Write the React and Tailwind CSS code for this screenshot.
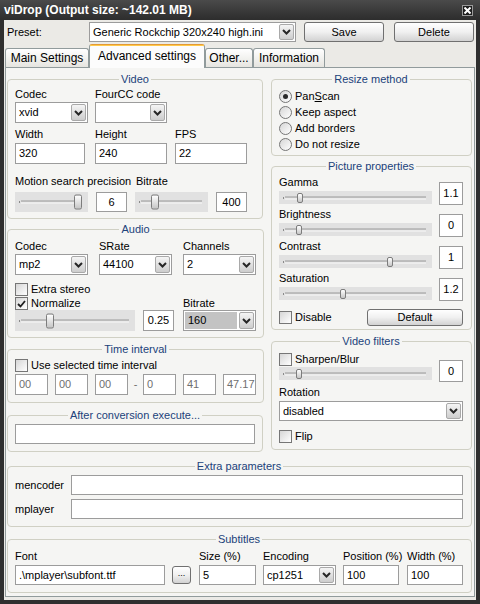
import React from "react";

// Small building blocks of the classic dialog look

function Lbl({ children, className = "" }) {
  return <div className={`h-[13px] whitespace-nowrap leading-[13px] ${className}`}>{children}</div>;
}

function Group({ title, className = "", children }) {
  return (
    <fieldset className={`rounded-[4px] border border-[#d0d0c4] ${className}`}>
      <legend className="mx-auto h-[13px] px-[2px] leading-[13px] text-[#21427a]">{title}</legend>
      {children}
    </fieldset>
  );
}

function Edit({ value = "", className = "", center = false, dim = false }) {
  return (
    <div
      className={`flex items-center overflow-hidden whitespace-nowrap border border-[#9c9c9c] bg-white leading-[13px] ${
        center ? "justify-center" : "pl-[3px]"
      } ${dim ? "text-[#6f6f6f]" : ""} ${className}`}
    >
      {value}
    </div>
  );
}

function Chevron() {
  return (
    <svg width="9" height="6" viewBox="0 0 9 6">
      <polyline points="1,1 4.5,4.5 8,1" fill="none" stroke="#262626" strokeWidth="2" />
    </svg>
  );
}

function Combo({ value = "", className = "", gray = false }) {
  return (
    <div className={`flex border border-[#9c9c9c] bg-white ${className}`}>
      <div
        className={`flex flex-1 items-center overflow-hidden whitespace-nowrap pl-[3px] leading-[13px] ${
          gray ? "m-[1px] bg-[#c3c3c3]" : ""
        }`}
      >
        {value}
      </div>
      <div className="m-[1px] flex w-[15px] items-center justify-center rounded-[2px] border border-[#a9a9a9] bg-linear-to-b from-[#f5f5f5] to-[#cdcdcd]">
        <Chevron />
      </div>
    </div>
  );
}

function Slider({ width, frac, small = false, className = "" }) {
  const thumb = small ? 6 : 8;
  const left = 6 + Math.round(frac * (width - 12 - thumb));
  return (
    <div className={`relative bg-[#e1e1e1] ${className}`}>
      <div className="absolute left-[6px] right-[6px] top-1/2 h-[3px] -translate-y-1/2 border-y border-t-[#a0a0a0] border-b-white bg-[#d6d6d6]" />
      <div className="absolute left-[4px] top-1/2 h-[2px] w-[1px] -translate-y-1/2 bg-[#8a8a8a]" />
      <div
        className={`absolute top-1/2 -translate-y-1/2 rounded-[2px] border border-[#7c7c7c] bg-linear-to-b from-white to-[#c6c6c6] ${
          small ? "h-[10px] w-[6px]" : "h-[15px] w-[8px]"
        }`}
        style={{ left }}
      />
    </div>
  );
}

function Check({ label, checked = false, className = "" }) {
  return (
    <div className={`flex h-[13px] items-center gap-[3px] ${className}`}>
      <div className="flex h-[13px] w-[13px] shrink-0 items-center justify-center border border-[#767676] bg-linear-to-br from-[#d6d6d6] to-white">
        {checked && (
          <svg width="9" height="8" viewBox="0 0 9 8">
            <polyline points="1,4 3.5,6.5 8,1" fill="none" stroke="#1e1e1e" strokeWidth="1.8" />
          </svg>
        )}
      </div>
      <span className="whitespace-nowrap leading-[13px]">{label}</span>
    </div>
  );
}

function Radio({ children, checked = false }) {
  return (
    <div className="flex h-[13px] items-center gap-[3px]">
      <div className="flex h-[13px] w-[13px] items-center justify-center rounded-full border border-[#767676] bg-linear-to-br from-[#d6d6d6] to-white">
        {checked && <div className="h-[5px] w-[5px] rounded-full bg-[#2a2a2a]" />}
      </div>
      <span className="whitespace-nowrap leading-[13px]">{children}</span>
    </div>
  );
}

function Btn({ children, className = "" }) {
  return (
    <button
      type="button"
      className={`flex items-center justify-center rounded-[3px] border border-[#707070] bg-linear-to-b from-white via-[#f0f0f0] to-[#d2d2d2] leading-[13px] ${className}`}
    >
      {children}
    </button>
  );
}

function Tab({ children, active = false, className = "" }) {
  if (active) {
    return (
      <div
        className={`-mb-[1px] flex h-[24px] flex-col rounded-t-[3px] border border-b-0 border-[#919b9c] border-t-[#e39a36] bg-[#fcfcfc] ${className}`}
      >
        <div className="h-[1px] bg-[#ffc94a]" />
        <div className="flex flex-1 items-center justify-center pb-[2px] text-[12px] leading-[14px]">{children}</div>
      </div>
    );
  }
  return (
    <div
      className={`flex h-[19px] items-center justify-center rounded-t-[3px] border border-b-0 border-[#919b9c] bg-linear-to-b from-white to-[#e6e5e0] text-[12px] leading-[14px] ${className}`}
    >
      {children}
    </div>
  );
}

function PropRow({ label, value, frac, className = "" }) {
  return (
    <div className={`flex items-start ${className}`}>
      <div className="flex w-[153px] flex-col">
        <Lbl>{label}</Lbl>
        <Slider width={153} frac={frac} small className="mt-[2px] h-[13px]" />
      </div>
      <Edit value={value} center className="ml-[7px] mt-[6px] h-[23px] w-[24px]" />
    </div>
  );
}

export default function App() {
  return (
    <div className="flex h-[604px] w-[480px] flex-col overflow-hidden bg-[#2f2f2f] font-['Liberation_Sans',Arial,sans-serif] text-[11px] text-black">
      {/* title bar */}
      <div className="flex h-[20px] shrink-0 items-center justify-between bg-linear-to-b from-[#4a4a4a] to-[#2d2d2d] pl-[4px] pr-[7px]">
        <span className="text-[12px] font-bold leading-[14px] text-white">viDrop (Output size: ~142.01 MB)</span>
        <div className="flex h-[11px] w-[11px] items-center justify-center border border-[#9a9a9a] bg-[#1e1e1e]">
          <svg width="7" height="7" viewBox="0 0 7 7">
            <path d="M0.5 0.5 L6.5 6.5 M6.5 0.5 L0.5 6.5" stroke="#fff" strokeWidth="2" />
          </svg>
        </div>
      </div>

      <div className="mx-[4px] mb-[4px] flex flex-1 flex-col bg-[#ebeae6]">
        {/* preset row */}
        <div className="flex h-[24px] shrink-0 items-start pl-[3px] pt-[2px]">
          <span className="w-[82px] leading-[20px]">Preset:</span>
          <Combo value="Generic Rockchip 320x240 high.ini" className="h-[20px] w-[207px]" />
          <Btn className="ml-[8px] h-[20px] w-[80px]">Save</Btn>
          <Btn className="ml-[10px] h-[20px] w-[80px]">Delete</Btn>
        </div>

        {/* tabs */}
        <div className="relative z-10 flex h-[23px] shrink-0 items-end pl-[1px]">
          <Tab className="w-[84px]">Main Settings</Tab>
          <Tab active className="w-[116px]">
            Advanced settings
          </Tab>
          <Tab className="w-[48px]">Other...</Tab>
          <Tab className="w-[72px]">Information</Tab>
        </div>

        {/* tab page */}
        <div className="mx-[1px] mb-[3px] flex-1 border border-[#919b9c] bg-[#f5f5f3] pl-[1px] pt-[5px]">
          <div className="flex items-start">
            {/* left column */}
            <div className="flex w-[256px] flex-col">
              <Group title="Video" className="pb-[6px] pl-[7px] pr-[7px]">
                <div className="mt-[2px] flex">
                  <div className="flex w-[73px] flex-col">
                    <Lbl>Codec</Lbl>
                    <Combo value="xvid" className="mt-[1px] h-[21px]" />
                  </div>
                  <div className="ml-[7px] flex w-[72px] flex-col">
                    <Lbl>FourCC code</Lbl>
                    <Combo className="mt-[1px] h-[21px]" />
                  </div>
                </div>
                <div className="mt-[5px] flex">
                  <div className="flex w-[70px] flex-col">
                    <Lbl>Width</Lbl>
                    <Edit value="320" className="mt-[2px] h-[21px]" />
                  </div>
                  <div className="ml-[10px] flex w-[72px] flex-col">
                    <Lbl>Height</Lbl>
                    <Edit value="240" className="mt-[2px] h-[21px]" />
                  </div>
                  <div className="ml-[8px] flex w-[72px] flex-col">
                    <Lbl>FPS</Lbl>
                    <Edit value="22" className="mt-[2px] h-[21px]" />
                  </div>
                </div>
                <div className="mt-[11px] flex">
                  <Lbl className="w-[121px]">Motion search precision</Lbl>
                  <Lbl>Bitrate</Lbl>
                </div>
                <div className="mt-[4px] flex">
                  <Slider width={73} frac={1} className="h-[20px] w-[73px]" />
                  <Edit value="6" center className="ml-[8px] h-[20px] w-[31px]" />
                  <Slider width={73} frac={0.19} className="ml-[8px] h-[20px] w-[73px]" />
                  <Edit value="400" center className="ml-[8px] h-[20px] w-[31px]" />
                </div>
              </Group>

              <Group title="Audio" className="mt-[4px] pb-[6px] pl-[7px] pr-[7px]">
                <div className="mt-[4px] flex">
                  <div className="flex w-[73px] flex-col">
                    <Lbl>Codec</Lbl>
                    <Combo value="mp2" className="mt-[1px] h-[21px]" />
                  </div>
                  <div className="ml-[11px] flex w-[73px] flex-col">
                    <Lbl>SRate</Lbl>
                    <Combo value="44100" className="mt-[1px] h-[21px]" />
                  </div>
                  <div className="ml-[11px] flex w-[73px] flex-col">
                    <Lbl>Channels</Lbl>
                    <Combo value="2" className="mt-[1px] h-[21px]" />
                  </div>
                </div>
                <Check label="Extra stereo" className="mt-[8px]" />
                <div className="mt-[1px] flex">
                  <Check label="Normalize" checked className="w-[168px]" />
                  <Lbl>Bitrate</Lbl>
                </div>
                <div className="flex">
                  <Slider width={120} frac={0.25} className="h-[21px] w-[120px]" />
                  <Edit value="0.25" center className="ml-[8px] h-[21px] w-[31px]" />
                  <Combo value="160" gray className="ml-[9px] h-[21px] w-[73px]" />
                </div>
              </Group>

              <Group title="Time interval" className="mt-[5px] pb-[7px] pl-[7px] pr-[7px]">
                <Check label="Use selected time interval" className="mt-[3px]" />
                <div className="mt-[2px] flex items-center">
                  <Edit value="00" dim className="h-[21px] w-[33px]" />
                  <Edit value="00" dim className="ml-[7px] h-[21px] w-[33px]" />
                  <Edit value="00" dim className="ml-[7px] h-[21px] w-[33px]" />
                  <span className="w-[15px] text-center text-[#6f6f6f]">-</span>
                  <Edit value="0" dim className="h-[21px] w-[33px]" />
                  <Edit value="41" dim className="ml-[7px] h-[21px] w-[33px]" />
                  <Edit value="47.17" dim className="ml-[7px] h-[21px] w-[33px]" />
                </div>
              </Group>

              <Group title="After conversion execute..." className="mt-[6px] pb-[7px] pl-[7px] pr-[7px]">
                <Edit className="mt-[2px] h-[20px]" />
              </Group>
            </div>

            {/* right column */}
            <div className="ml-[8px] flex w-[201px] flex-col">
              <Group title="Resize method" className="pb-[4px] pl-[7px] pr-[8px]">
                <div className="mt-[4px] flex flex-col gap-[3px]">
                  <Radio checked>
                    Pan<span className="underline">S</span>can
                  </Radio>
                  <Radio>Keep aspect</Radio>
                  <Radio>Add borders</Radio>
                  <Radio>Do not resize</Radio>
                </div>
              </Group>

              <Group title="Picture properties" className="mt-[4px] pb-[3px] pl-[7px] pr-[8px]">
                <PropRow label="Gamma" value="1.1" frac={0.089} className="mt-[3px]" />
                <PropRow label="Brightness" value="0" frac={0.081} className="mt-[3px]" />
                <PropRow label="Contrast" value="1" frac={0.756} className="mt-[3px]" />
                <PropRow label="Saturation" value="1.2" frac={0.41} className="mt-[3px]" />
                <div className="mt-[8px] flex h-[17px] items-center">
                  <Check label="Disable" />
                  <Btn className="ml-auto h-[17px] w-[96px]">Default</Btn>
                </div>
              </Group>

              <Group title="Video filters" className="mt-[5px] pb-[6px] pl-[7px] pr-[8px]">
                <div className="mt-[5px] flex items-start">
                  <div className="flex w-[153px] flex-col">
                    <Check label="Sharpen/Blur" />
                    <Slider width={153} frac={0.081} small className="mt-[1px] h-[13px]" />
                  </div>
                  <Edit value="0" center className="ml-[7px] mt-[7px] h-[22px] w-[24px]" />
                </div>
                <Lbl className="mt-[4px]">Rotation</Lbl>
                <Combo value="disabled" className="mt-[2px] h-[20px]" />
                <Check label="Flip" className="mt-[9px]" />
              </Group>
            </div>
          </div>

          <Group title="Extra parameters" className="mt-[8px] w-[465px] pb-[7px] pl-[7px] pr-[8px]">
            <div className="mt-[2px] flex items-center">
              <span className="w-[56px] leading-[13px]">mencoder</span>
              <Edit className="h-[20px] flex-1" />
            </div>
            <div className="mt-[4px] flex items-center">
              <span className="w-[56px] leading-[13px]">mplayer</span>
              <Edit className="h-[20px] flex-1" />
            </div>
          </Group>

          <Group title="Subtitles" className="mt-[6px] w-[465px] pb-[7px] pl-[7px] pr-[8px]">
            <div className="mt-[4px] flex items-end">
              <div className="flex w-[150px] flex-col">
                <Lbl>Font</Lbl>
                <Edit value=".\mplayer\subfont.ttf" className="mt-[2px] h-[20px]" />
              </div>
              <Btn className="mb-[1px] ml-[7px] h-[18px] w-[19px] pb-[3px] text-[9px]">...</Btn>
              <div className="ml-[8px] flex w-[57px] flex-col">
                <Lbl>Size (%)</Lbl>
                <Edit value="5" className="mt-[2px] h-[20px]" />
              </div>
              <div className="ml-[7px] flex w-[73px] flex-col">
                <Lbl>Encoding</Lbl>
                <Combo value="cp1251" className="mt-[2px] h-[20px]" />
              </div>
              <div className="ml-[7px] flex w-[56px] flex-col">
                <Lbl>Position (%)</Lbl>
                <Edit value="100" className="mt-[2px] h-[20px]" />
              </div>
              <div className="ml-[8px] flex w-[56px] flex-col">
                <Lbl>Width (%)</Lbl>
                <Edit value="100" className="mt-[2px] h-[20px]" />
              </div>
            </div>
          </Group>
        </div>
      </div>
    </div>
  );
}
